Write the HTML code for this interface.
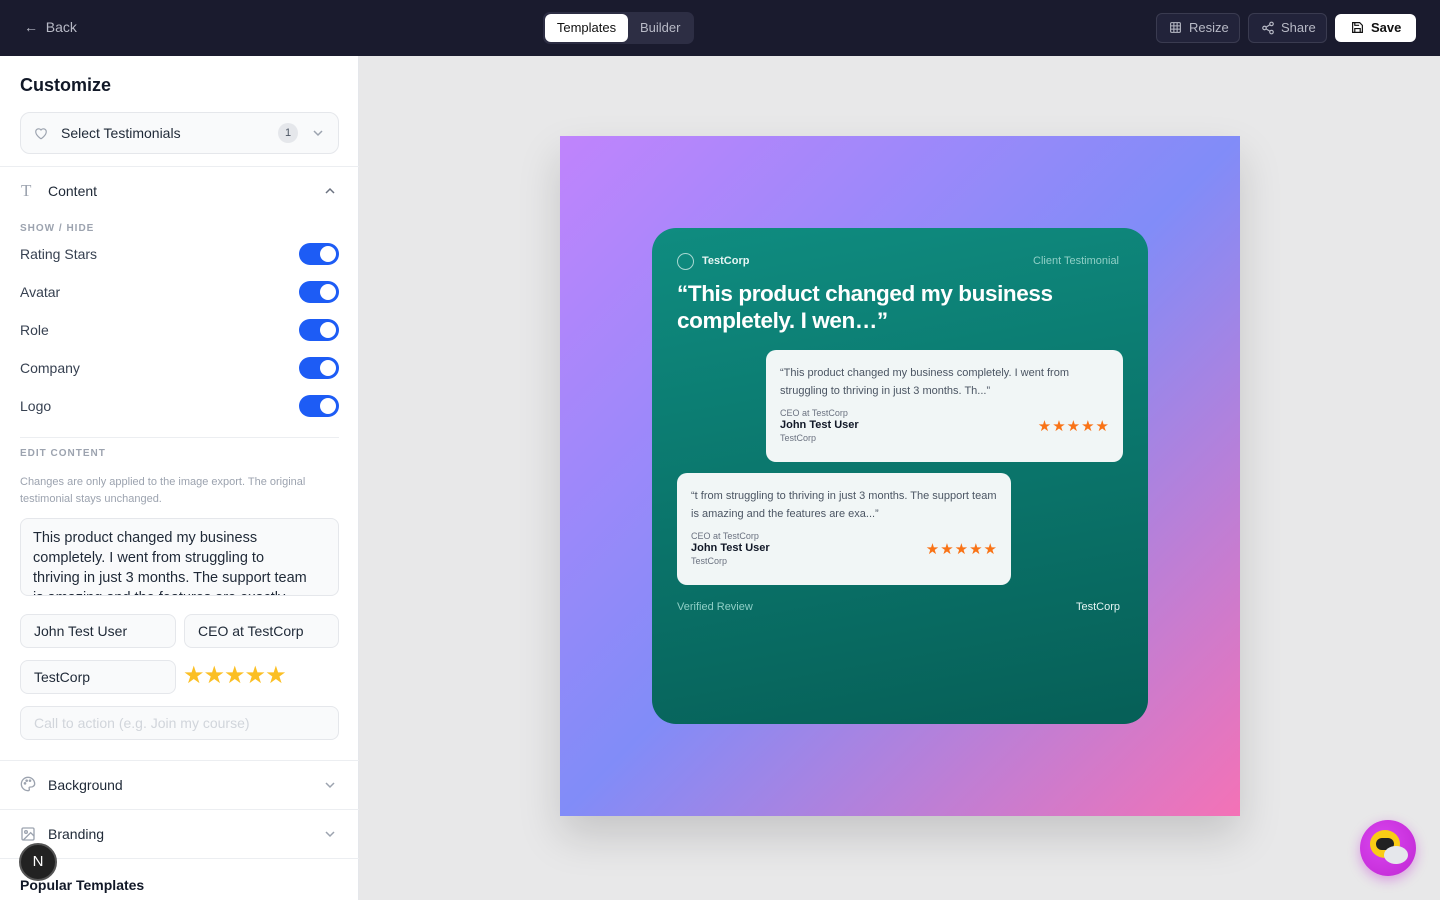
<!DOCTYPE html>
<html><head><meta charset="utf-8"><style>
*{box-sizing:border-box;margin:0;padding:0}
body{width:1440px;height:900px;overflow:hidden;font-family:"Liberation Sans",sans-serif;background:#e8e8e9;position:relative;color:#1f2937}
.hdr{position:absolute;left:0;top:0;width:1440px;height:56px;background:#1a1b2e}
.abs{position:absolute}
.side{position:absolute;left:0;top:56px;width:359px;height:844px;background:#fff;border-right:1px solid #e5e7eb}
.tog{position:absolute;left:299px;width:40px;height:22px;border-radius:11px;background:#1d5cf5}
.tog:after{content:"";position:absolute;right:3px;top:3px;width:16px;height:16px;border-radius:50%;background:#fff}
.lbl{position:absolute;left:20px;font-size:14px;color:#374151}
.inp{position:absolute;border:1px solid #e5e7eb;background:#f9fafb;border-radius:8px;font-size:14px;color:#1f2937;padding-left:13px;line-height:32px}
.star{color:#fbbf24;font-size:24px;letter-spacing:-1px}
.card{position:absolute;background:#f1f6f6;border-radius:10px;padding:14px 14px}
.card .q{font-size:11px;color:#4b5563;line-height:18px}
.card .r{font-size:9px;color:#6b7280;margin-top:8px}
.card .n{font-size:11px;font-weight:bold;color:#111827;margin-top:1px}
.card .c{font-size:9px;color:#6b7280;margin-top:2px}
.card .s{position:absolute;right:13px;color:#f97316;font-size:15px;letter-spacing:1px}
</style></head><body>
<div class="hdr">
 <div class="abs" style="left:24px;top:19px;color:#b8bac6;font-size:14px">&#8592;&nbsp;&nbsp;Back</div>
 <div class="abs" style="left:543px;top:12px;width:151px;height:32px;background:#2d2e44;border-radius:7px"></div>
 <div class="abs" style="left:545px;top:14px;width:83px;height:28px;background:#fff;border-radius:6px;font-size:13px;color:#111;text-align:center;line-height:28px">Templates</div>
 <div class="abs" style="left:640px;top:14px;font-size:13px;color:#b8bac6;line-height:28px">Builder</div>
 <div class="abs" style="left:1156px;top:13px;width:84px;height:30px;border:1px solid #3a3b50;border-radius:6px;background:#22233a;color:#b8bac6;font-size:13px;line-height:28px;padding-left:32px">Resize</div>
 <svg class="abs" style="left:1169px;top:21px" width="13" height="13" viewBox="0 0 24 24" fill="none" stroke="#b8bac6" stroke-width="2"><rect x="3" y="3" width="18" height="18" rx="2"/><path d="M3 9h18M3 15h18M9 3v18M15 3v18"/></svg>
 <div class="abs" style="left:1248px;top:13px;width:79px;height:30px;border:1px solid #3a3b50;border-radius:6px;background:#22233a;color:#b8bac6;font-size:13px;line-height:28px;padding-left:32px">Share</div>
 <svg class="abs" style="left:1261px;top:21px" width="14" height="14" viewBox="0 0 24 24" fill="none" stroke="#b8bac6" stroke-width="2"><circle cx="18" cy="5" r="3"/><circle cx="6" cy="12" r="3"/><circle cx="18" cy="19" r="3"/><path d="M8.6 13.5l6.8 4M15.4 6.5l-6.8 4"/></svg>
 <div class="abs" style="left:1335px;top:14px;width:81px;height:28px;background:#fff;border-radius:6px;color:#111;font-size:13px;font-weight:bold;line-height:28px;padding-left:36px">Save</div>
 <svg class="abs" style="left:1351px;top:21px" width="13" height="13" viewBox="0 0 24 24" fill="none" stroke="#111" stroke-width="2.2"><path d="M5 3h11l5 5v13H3V3z"/><path d="M7 21v-7h10v7M7 3v5h8"/></svg>
</div>
<div class="side">
 <div class="abs" style="left:20px;top:19px;font-size:18px;font-weight:bold;color:#111827">Customize</div>
 <div class="abs" style="left:20px;top:56px;width:319px;height:42px;border:1px solid #e5e7eb;border-radius:10px;background:#f9fafb"></div>
 <svg class="abs" style="left:34px;top:71px" width="14" height="13" viewBox="0 0 24 22" fill="none" stroke="#9ca3af" stroke-width="2"><path d="M12 20s-9-5.5-9-12a5 5 0 0 1 9-3 5 5 0 0 1 9 3c0 6.5-9 12-9 12z"/></svg>
 <div class="abs" style="left:61px;top:69px;font-size:14px;color:#1f2937">Select Testimonials</div>
 <div class="abs" style="left:278px;top:67px;width:20px;height:20px;border-radius:10px;background:#e5e7eb;font-size:11px;text-align:center;line-height:20px;color:#4b5563">1</div>
 <svg class="abs" style="left:312px;top:72px" width="12" height="10" viewBox="0 0 12 10" fill="none" stroke="#9ca3af" stroke-width="1.5"><path d="M2 3l4 4 4-4"/></svg>
 <div class="abs" style="left:0;top:110px;width:359px;height:1px;background:#eceef1"></div>
 <div class="abs" style="left:21px;top:125px;font-family:'Liberation Serif',serif;font-size:17px;color:#9ca3af">T</div>
 <div class="abs" style="left:48px;top:127px;font-size:14px;color:#1f2937">Content</div>
 <svg class="abs" style="left:324px;top:130px" width="12" height="10" viewBox="0 0 12 10" fill="none" stroke="#6b7280" stroke-width="1.5"><path d="M2 7l4-4 4 4"/></svg>
 <div class="abs" style="left:20px;top:167px;font-size:10px;font-weight:bold;letter-spacing:1px;color:#9ca3af">SHOW / HIDE</div>
 <div class="lbl" style="top:190px">Rating Stars</div><div class="tog" style="top:187px"></div>
 <div class="lbl" style="top:228px">Avatar</div><div class="tog" style="top:225px"></div>
 <div class="lbl" style="top:266px">Role</div><div class="tog" style="top:263px"></div>
 <div class="lbl" style="top:304px">Company</div><div class="tog" style="top:301px"></div>
 <div class="lbl" style="top:342px">Logo</div><div class="tog" style="top:339px"></div>
 <div class="abs" style="left:20px;top:381px;width:319px;height:1px;background:#eceef1"></div>
 <div class="abs" style="left:20px;top:392px;font-size:10px;font-weight:bold;letter-spacing:1px;color:#9ca3af">EDIT CONTENT</div>
 <div class="abs" style="left:20px;top:418px;width:315px;font-size:11px;line-height:17px;color:#9ca3af">Changes are only applied to the image export. The original testimonial stays unchanged.</div>
 <div class="abs" style="left:20px;top:462px;width:319px;height:78px;border:1px solid #e5e7eb;border-radius:8px;background:#f9fafb;overflow:hidden;padding:9px 30px 9px 12px;font-size:14.5px;line-height:20px;color:#1f2937">This product changed my business completely. I went from struggling to thriving in just 3 months. The support team is amazing and the features are exactly</div>
 <div class="inp" style="left:20px;top:558px;width:156px;height:34px">John Test User</div>
 <div class="inp" style="left:184px;top:558px;width:155px;height:34px">CEO at TestCorp</div>
 <div class="inp" style="left:20px;top:604px;width:156px;height:34px">TestCorp</div>
 <div class="abs star" style="left:183px;top:605px">★★★★★</div>
 <div class="inp" style="left:20px;top:650px;width:319px;height:34px;color:#d1d5db">Call to action (e.g. Join my course)</div>
 <div class="abs" style="left:0;top:704px;width:359px;height:1px;background:#eceef1"></div>
 <svg class="abs" style="left:20px;top:720px" width="16" height="16" viewBox="0 0 24 24" fill="none" stroke="#9ca3af" stroke-width="2"><path d="M12 2a10 10 0 1 0 0 20c1.5 0 2-1 2-2 0-1.5-1-2 0-3s3 0 5-1 3-3 3-4c0-6-5-10-10-10z"/><circle cx="7.5" cy="11" r="1"/><circle cx="10" cy="7" r="1"/><circle cx="15" cy="7" r="1"/></svg>
 <div class="abs" style="left:48px;top:721px;font-size:14px;color:#1f2937">Background</div>
 <svg class="abs" style="left:324px;top:724px" width="12" height="10" viewBox="0 0 12 10" fill="none" stroke="#9ca3af" stroke-width="1.5"><path d="M2 3l4 4 4-4"/></svg>
 <div class="abs" style="left:0;top:753px;width:359px;height:1px;background:#eceef1"></div>
 <svg class="abs" style="left:20px;top:770px" width="16" height="16" viewBox="0 0 24 24" fill="none" stroke="#9ca3af" stroke-width="2"><rect x="3" y="3" width="18" height="18" rx="2"/><circle cx="9" cy="9" r="2"/><path d="M21 15l-5-5L5 21"/></svg>
 <div class="abs" style="left:48px;top:770px;font-size:14px;color:#1f2937">Branding</div>
 <svg class="abs" style="left:324px;top:773px" width="12" height="10" viewBox="0 0 12 10" fill="none" stroke="#9ca3af" stroke-width="1.5"><path d="M2 3l4 4 4-4"/></svg>
 <div class="abs" style="left:0;top:802px;width:359px;height:1px;background:#eceef1"></div>
 <div class="abs" style="left:20px;top:821px;font-size:14px;font-weight:bold;color:#111827">Popular Templates</div>
 <div class="abs" style="left:19px;top:787px;width:38px;height:38px;border-radius:50%;background:#222;border:2px solid #555;color:#fff;font-size:15px;text-align:center;line-height:34px">N</div>
</div>
<div class="abs" style="left:560px;top:136px;width:680px;height:680px;background:linear-gradient(135deg,#c084fc 0%,#818cf8 50%,#f472b6 100%);box-shadow:0 20px 40px rgba(0,0,0,.15)"></div>
<div class="abs" style="left:652px;top:228px;width:496px;height:496px;border-radius:24px;background:linear-gradient(170deg,#0f8c80,#065f57)"></div>
<div class="abs" style="left:677px;top:253px;width:17px;height:17px;border:1.5px solid #a7d8d2;border-radius:50%"></div>
<div class="abs" style="left:702px;top:255px;font-size:11px;font-weight:bold;color:#e5f5f3">TestCorp</div>
<div class="abs" style="left:1033px;top:255px;font-size:11px;color:#8fcfc6">Client Testimonial</div>
<div class="abs" style="left:677px;top:280px;width:440px;font-size:22.5px;font-weight:bold;line-height:27px;color:#fff;letter-spacing:-.4px">“This product changed my business completely. I wen…”</div>
<div class="card" style="left:766px;top:350px;width:357px;height:112px">
 <div class="q">“This product changed my business completely. I went from struggling to thriving in just 3 months. Th...”</div>
 <div class="r">CEO at TestCorp</div><div class="n">John Test User</div><div class="c">TestCorp</div>
 <div class="s" style="top:67px">★★★★★</div>
</div>
<div class="card" style="left:677px;top:473px;width:334px;height:112px">
 <div class="q">“t from struggling to thriving in just 3 months. The support team is amazing and the features are exa...”</div>
 <div class="r">CEO at TestCorp</div><div class="n">John Test User</div><div class="c">TestCorp</div>
 <div class="s" style="top:67px">★★★★★</div>
</div>
<div class="abs" style="left:677px;top:601px;font-size:11px;color:#8fcfc6">Verified Review</div>
<div class="abs" style="left:1076px;top:601px;font-size:11px;color:#e5f5f3">TestCorp</div>
<div class="abs" style="left:1360px;top:820px;width:56px;height:56px;border-radius:50%;background:radial-gradient(circle at 40% 40%,#d946ef,#c026d3);box-shadow:0 4px 12px rgba(192,38,211,.4)"></div>
<div class="abs" style="left:1370px;top:830px;width:30px;height:28px;border-radius:50%;background:#facc15"></div>
<div class="abs" style="left:1376px;top:838px;width:18px;height:12px;border-radius:6px;background:#222"></div>
<div class="abs" style="left:1384px;top:846px;width:24px;height:18px;border-radius:50%;background:#e5e7eb"></div>
</body></html>
